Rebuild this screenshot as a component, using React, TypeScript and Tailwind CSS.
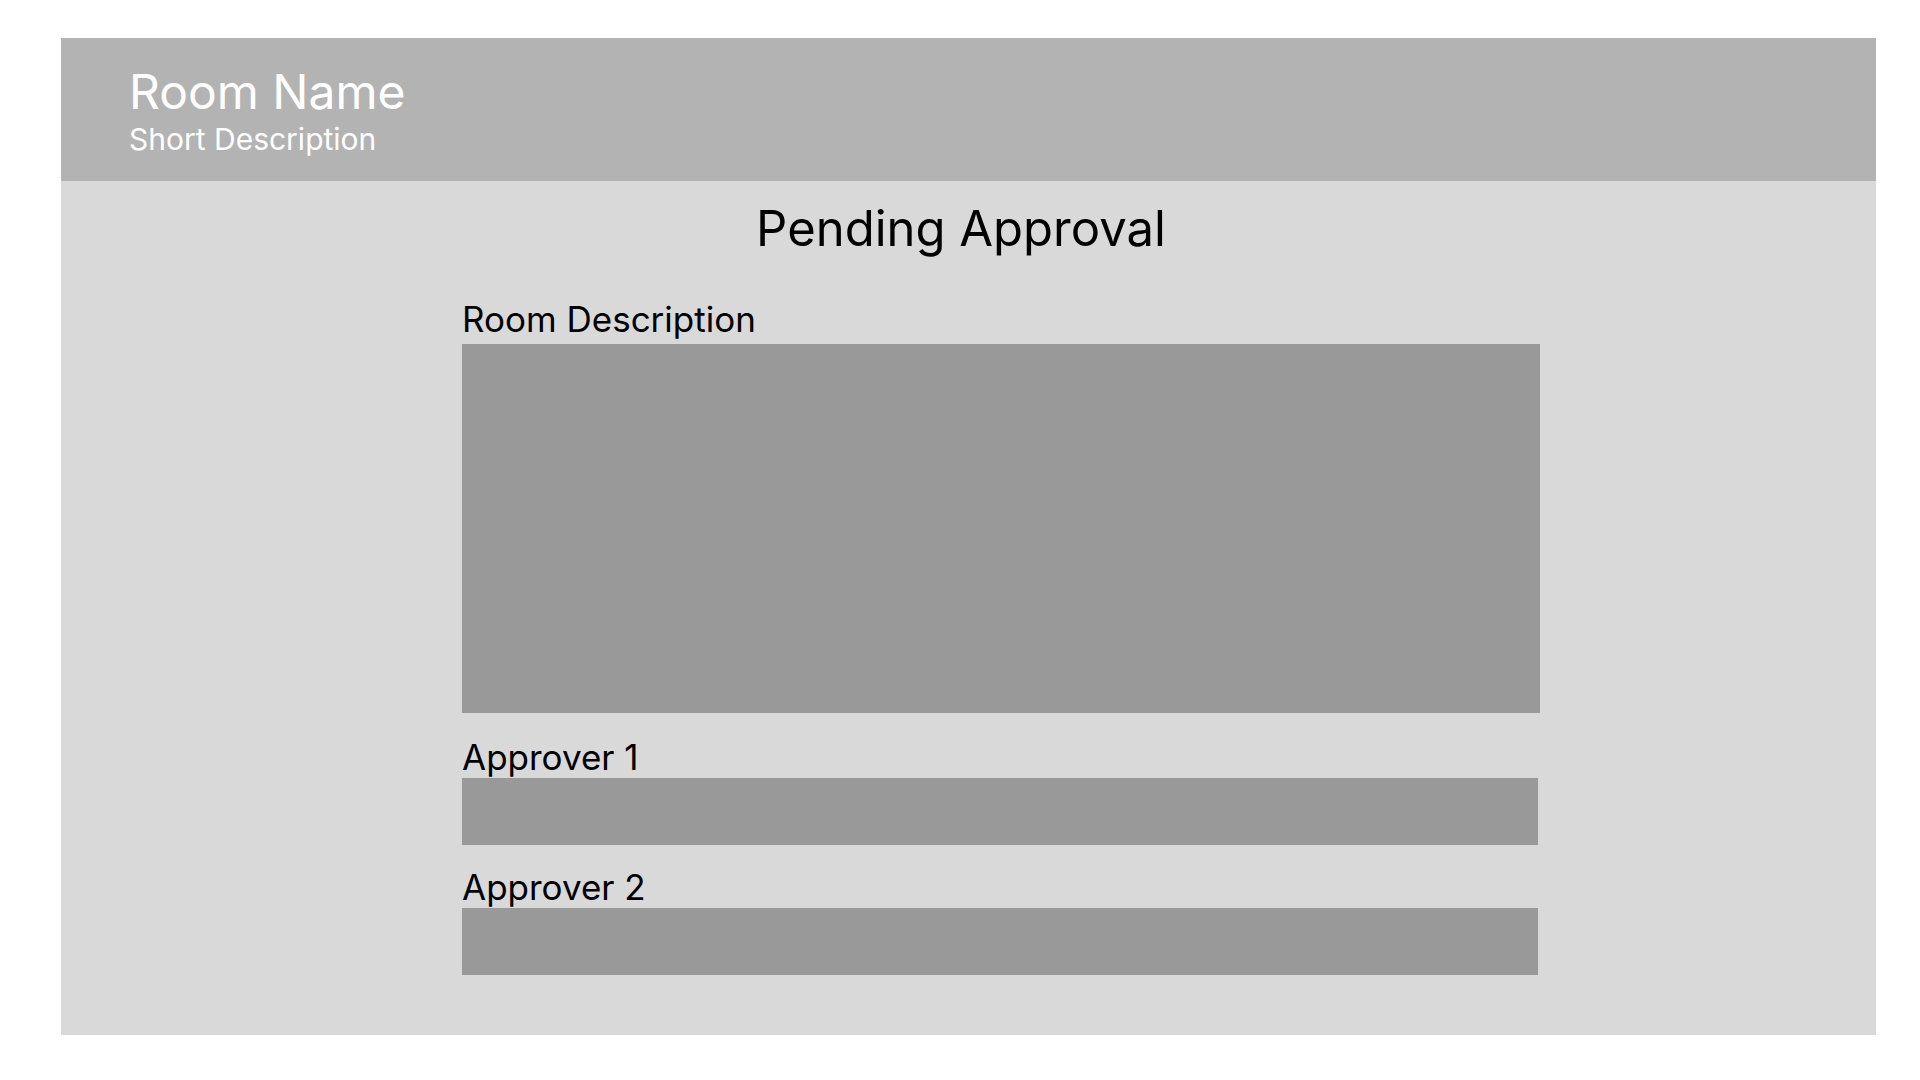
export default function App() {
  return (
    <div className="min-h-screen bg-white pt-[38px] pl-[61px]" style={{ fontFamily: 'Inter, "Noto Sans", sans-serif' }}>
      <div className="w-[1815px] h-[997px] bg-[#d9d9d9] flex flex-col">
        <header className="h-[143px] bg-[#b3b3b3] pl-[68px] pt-[25px] text-white">
          <h1 className="text-[48px] leading-[58px] font-normal">Room Name</h1>
          <p className="text-[30px] leading-[36px]">Short Description</p>
        </header>

        <main className="flex flex-col">
          <h2 className="text-[49px] leading-[60px] text-black text-center pt-[18px] pr-[15px]">
            Pending Approval
          </h2>

          <div className="pl-[401px] mt-[39px] text-black">
            <label className="block text-[35px] leading-[42px]">Room Description</label>
            <div className="mt-[4px] w-[1078px] h-[369px] bg-[#999999]" />

            <label className="block mt-[23px] text-[35px] leading-[42px]">Approver 1</label>
            <div className="w-[1076px] h-[67px] bg-[#999999]" />

            <label className="block mt-[22px] text-[35px] leading-[41px]">Approver 2</label>
            <div className="w-[1076px] h-[67px] bg-[#999999]" />
          </div>
        </main>
      </div>
    </div>
  )
}
